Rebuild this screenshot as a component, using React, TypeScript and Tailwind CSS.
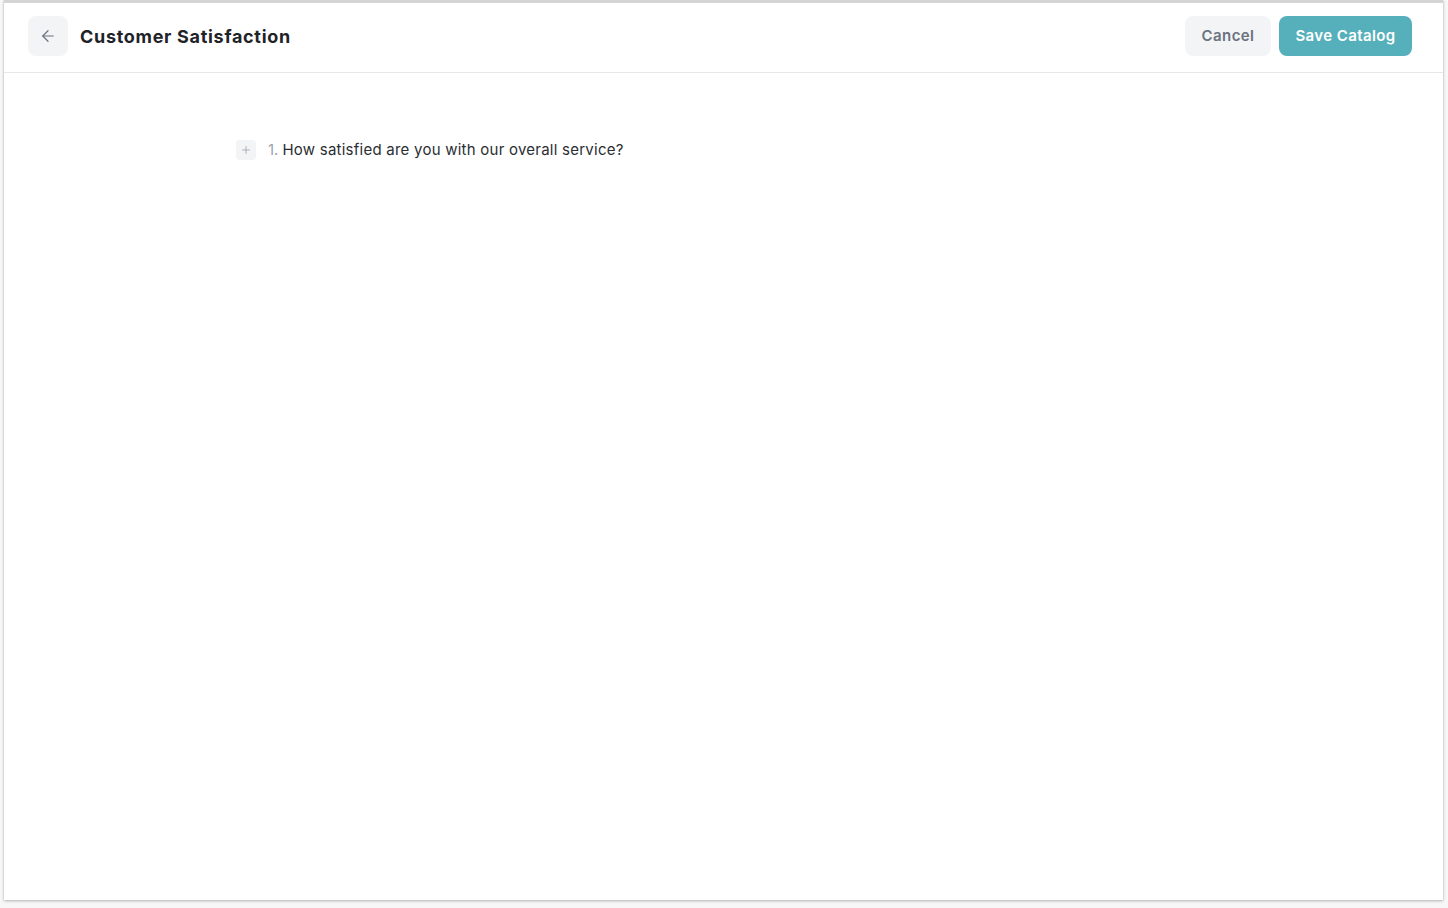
import { ArrowLeft, Plus } from "lucide-react";

export default function App() {
  return (
    <div className="h-[908px] w-full bg-[#f7f7f7] pl-[4px] pr-[5px] font-['Inter',sans-serif]">
      <div className="flex h-[900px] flex-col border-t-[3px] border-[#d4d4d4] bg-white shadow-[0_1px_3px_rgba(0,0,0,0.25),0_0_1px_rgba(0,0,0,0.2)]">
        <header className="flex h-[70px] items-start justify-between border-b border-[#e7e7e7] pl-[24px] pr-[31px] pt-[13px]">
          <div className="flex items-center gap-3">
            <button className="flex h-10 w-10 items-center justify-center rounded-lg bg-[#f3f4f6] text-[#6b7280]">
              <ArrowLeft className="h-[18px] w-[18px]" strokeWidth={1.6} />
            </button>
            <h1 className="text-[18px] font-bold tracking-[0.7px] text-[#1f2328]">
              Customer Satisfaction
            </h1>
          </div>
          <div className="flex items-center gap-2">
            <button className="h-10 w-[86px] rounded-lg bg-[#f3f4f6] text-[15px] font-semibold tracking-[0.4px] text-[#6b7280]">
              Cancel
            </button>
            <button className="h-10 w-[133px] rounded-lg bg-[#56b0bb] text-[15px] font-semibold tracking-[0.4px] text-white">
              Save Catalog
            </button>
          </div>
        </header>

        <main className="flex-1 pl-[232px] pt-[66px]">
          <div className="flex items-center">
            <button className="flex h-5 w-5 items-center justify-center rounded bg-[#f3f4f6] text-[#9ca3af]">
              <Plus className="h-3 w-3" strokeWidth={1.6} />
            </button>
            <span className="ml-3 text-[15px] text-[#9ca3af]">1.</span>
            <span className="ml-[4px] text-[15px] tracking-[0.24px] text-[#2a2e33]">
              How satisfied are you with our overall service?
            </span>
          </div>
        </main>
      </div>
    </div>
  );
}
